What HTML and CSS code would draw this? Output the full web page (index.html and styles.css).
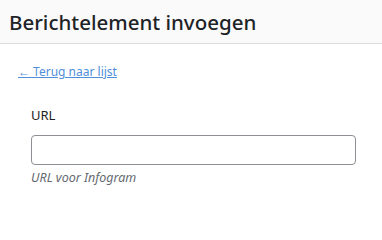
FILE: index.html
```html
<!DOCTYPE html>
<html lang="nl">
<head>
<meta charset="utf-8">
<link rel="stylesheet" href="styles.css">
</head>
<body>
<header class="header">
  <h1 class="title">Berichtelement invoegen</h1>
</header>
<main class="content">
  <a class="back" href="#">← Terug naar lijst</a>
  <div class="field">
    <label class="label" for="url">URL</label>
    <input class="input" id="url" type="text">
    <p class="help">URL voor Infogram</p>
  </div>
</main>
</body>
</html>
```
FILE: styles.css
```css
* { box-sizing: border-box; }
html, body { margin: 0; padding: 0; background: #fff; }
body {
  font-family: "Noto Sans", "Open Sans", sans-serif;
  color: #1e1e1e;
  width: 382px;
  height: 220px;
  overflow: hidden;
}
.header {
  height: 44px;
  background: #fafafa;
  border-bottom: 1px solid #dcdcde;
  display: flex;
  align-items: center;
  padding: 0 9px;
}
.title {
  margin: 0;
  font-size: 20.5px;
  font-weight: 500;
  color: #1d2327;
  letter-spacing: 0;
}
.content {
  padding: 19px 26px 0 18px;
  display: flex;
  flex-direction: column;
}
.back {
  font-size: 12px;
  color: #4f8fd9;
  text-decoration: underline;
  line-height: 18px;
  align-self: flex-start;
}
.field {
  margin-top: 25px;
  padding-left: 13px;
  display: flex;
  flex-direction: column;
}
.label {
  font-size: 13px;
  line-height: 18px;
  color: #1e1e1e;
}
.input {
  margin-top: 11px;
  width: 325px;
  height: 30px;
  border: 1px solid #8c8f94;
  border-radius: 4px;
  background: #fff;
}
.help {
  margin: 4px 0 0;
  font-size: 12.5px;
  font-style: italic;
  line-height: 18px;
  color: #646970;
}
```
